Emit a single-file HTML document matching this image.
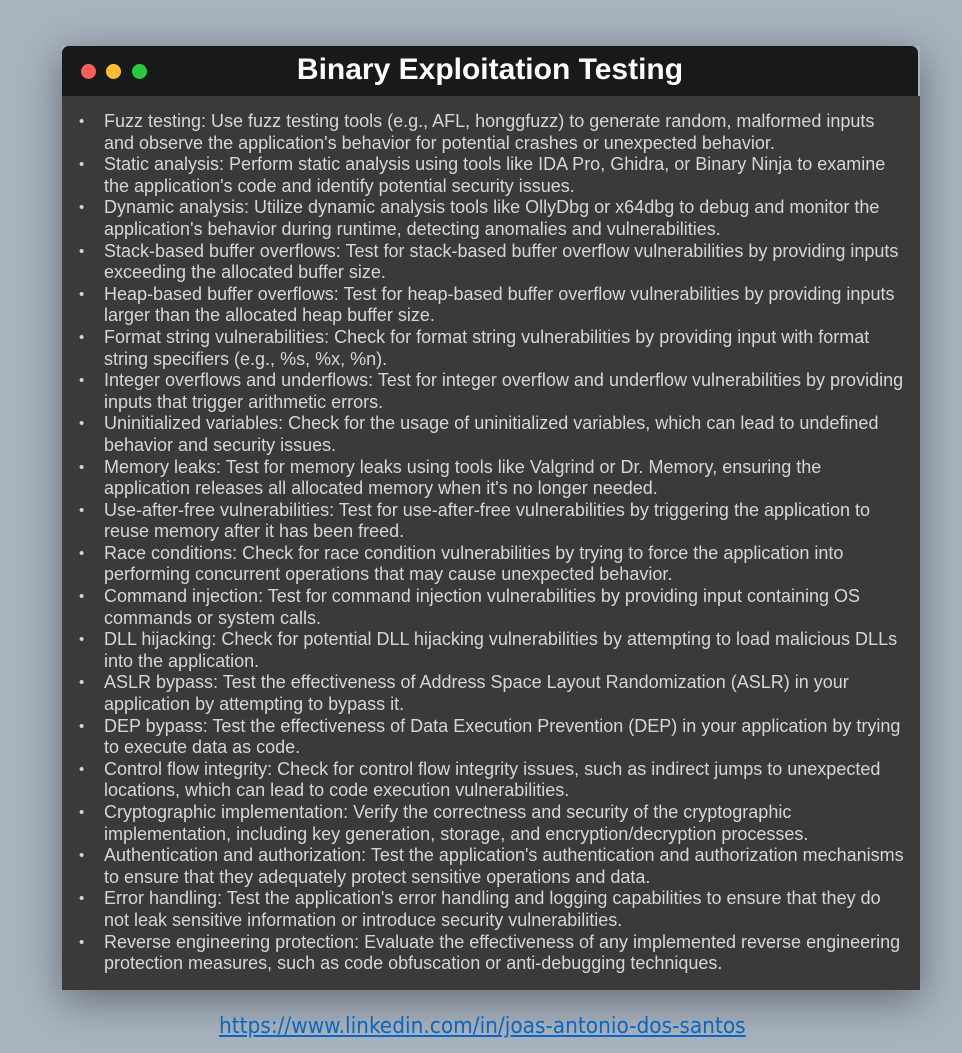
<!DOCTYPE html>
<html><head><meta charset="utf-8"><style>
html,body{margin:0;padding:0}
body{width:962px;height:1053px;background:#a9b4bf;position:relative;overflow:hidden;font-family:"Liberation Sans",Arial,sans-serif}
.win{position:absolute;left:62px;top:46px;width:858px;height:944px;box-shadow:0 10px 40px rgba(40,45,55,0.55)}
.hd{position:absolute;left:0;top:0;width:856px;height:50px;background:#18191b;border-radius:7px 7px 0 0}
.dot{position:absolute;top:18px;width:15px;height:15px;border-radius:50%}
.t{position:absolute;left:0;right:0;top:7px;text-align:center;color:#fff;font:bold 30px "Liberation Sans",sans-serif}
.bd{position:absolute;left:0;top:50px;width:858px;height:894px;background:#3b3a39}
ul{margin:0;padding:0;position:absolute;left:42px;top:15px;width:805px;color:#d6d6d8;font-size:18px;line-height:21.6px;list-style:none}
li{position:relative}
li:before{content:"•";position:absolute;left:-25px;font-size:15px}
a{position:absolute;left:219px;top:1013px;color:#0a66c2;font:22.4px "DejaVu Sans Condensed","Liberation Sans Narrow",sans-serif;text-decoration:underline}
</style></head><body>
<div class="win">
<div class="hd"><div class="dot" style="left:19px;background:#ff5f57"></div><div class="dot" style="left:44px;background:#febc2e"></div><div class="dot" style="left:70px;background:#28c840"></div><div class="t">Binary Exploitation Testing</div></div>
<div class="bd"><ul>
<li>Fuzz testing: Use fuzz testing tools (e.g., AFL, honggfuzz) to generate random, malformed inputs and observe the application's behavior for potential crashes or unexpected behavior.</li>
<li>Static analysis: Perform static analysis using tools like IDA Pro, Ghidra, or Binary Ninja to examine the application's code and identify potential security issues.</li>
<li>Dynamic analysis: Utilize dynamic analysis tools like OllyDbg or x64dbg to debug and monitor the application's behavior during runtime, detecting anomalies and vulnerabilities.</li>
<li>Stack-based buffer overflows: Test for stack-based buffer overflow vulnerabilities by providing inputs exceeding the allocated buffer size.</li>
<li>Heap-based buffer overflows: Test for heap-based buffer overflow vulnerabilities by providing inputs larger than the allocated heap buffer size.</li>
<li>Format string vulnerabilities: Check for format string vulnerabilities by providing input with format string specifiers (e.g., %s, %x, %n).</li>
<li>Integer overflows and underflows: Test for integer overflow and underflow vulnerabilities by providing inputs that trigger arithmetic errors.</li>
<li>Uninitialized variables: Check for the usage of uninitialized variables, which can lead to undefined behavior and security issues.</li>
<li>Memory leaks: Test for memory leaks using tools like Valgrind or Dr. Memory, ensuring the application releases all allocated memory when it's no longer needed.</li>
<li>Use-after-free vulnerabilities: Test for use-after-free vulnerabilities by triggering the application to reuse memory after it has been freed.</li>
<li>Race conditions: Check for race condition vulnerabilities by trying to force the application into performing concurrent operations that may cause unexpected behavior.</li>
<li>Command injection: Test for command injection vulnerabilities by providing input containing OS commands or system calls.</li>
<li>DLL hijacking: Check for potential DLL hijacking vulnerabilities by attempting to load malicious DLLs into the application.</li>
<li>ASLR bypass: Test the effectiveness of Address Space Layout Randomization (ASLR) in your application by attempting to bypass it.</li>
<li>DEP bypass: Test the effectiveness of Data Execution Prevention (DEP) in your application by trying to execute data as code.</li>
<li>Control flow integrity: Check for control flow integrity issues, such as indirect jumps to unexpected locations, which can lead to code execution vulnerabilities.</li>
<li>Cryptographic implementation: Verify the correctness and security of the cryptographic implementation, including key generation, storage, and encryption/decryption processes.</li>
<li>Authentication and authorization: Test the application's authentication and authorization mechanisms to ensure that they adequately protect sensitive operations and data.</li>
<li>Error handling: Test the application's error handling and logging capabilities to ensure that they do not leak sensitive information or introduce security vulnerabilities.</li>
<li>Reverse engineering protection: Evaluate the effectiveness of any implemented reverse engineering protection measures, such as code obfuscation or anti-debugging techniques.</li>
</ul></div>
</div>
<a>https://www.linkedin.com/in/joas-antonio-dos-santos</a>
</body></html>
